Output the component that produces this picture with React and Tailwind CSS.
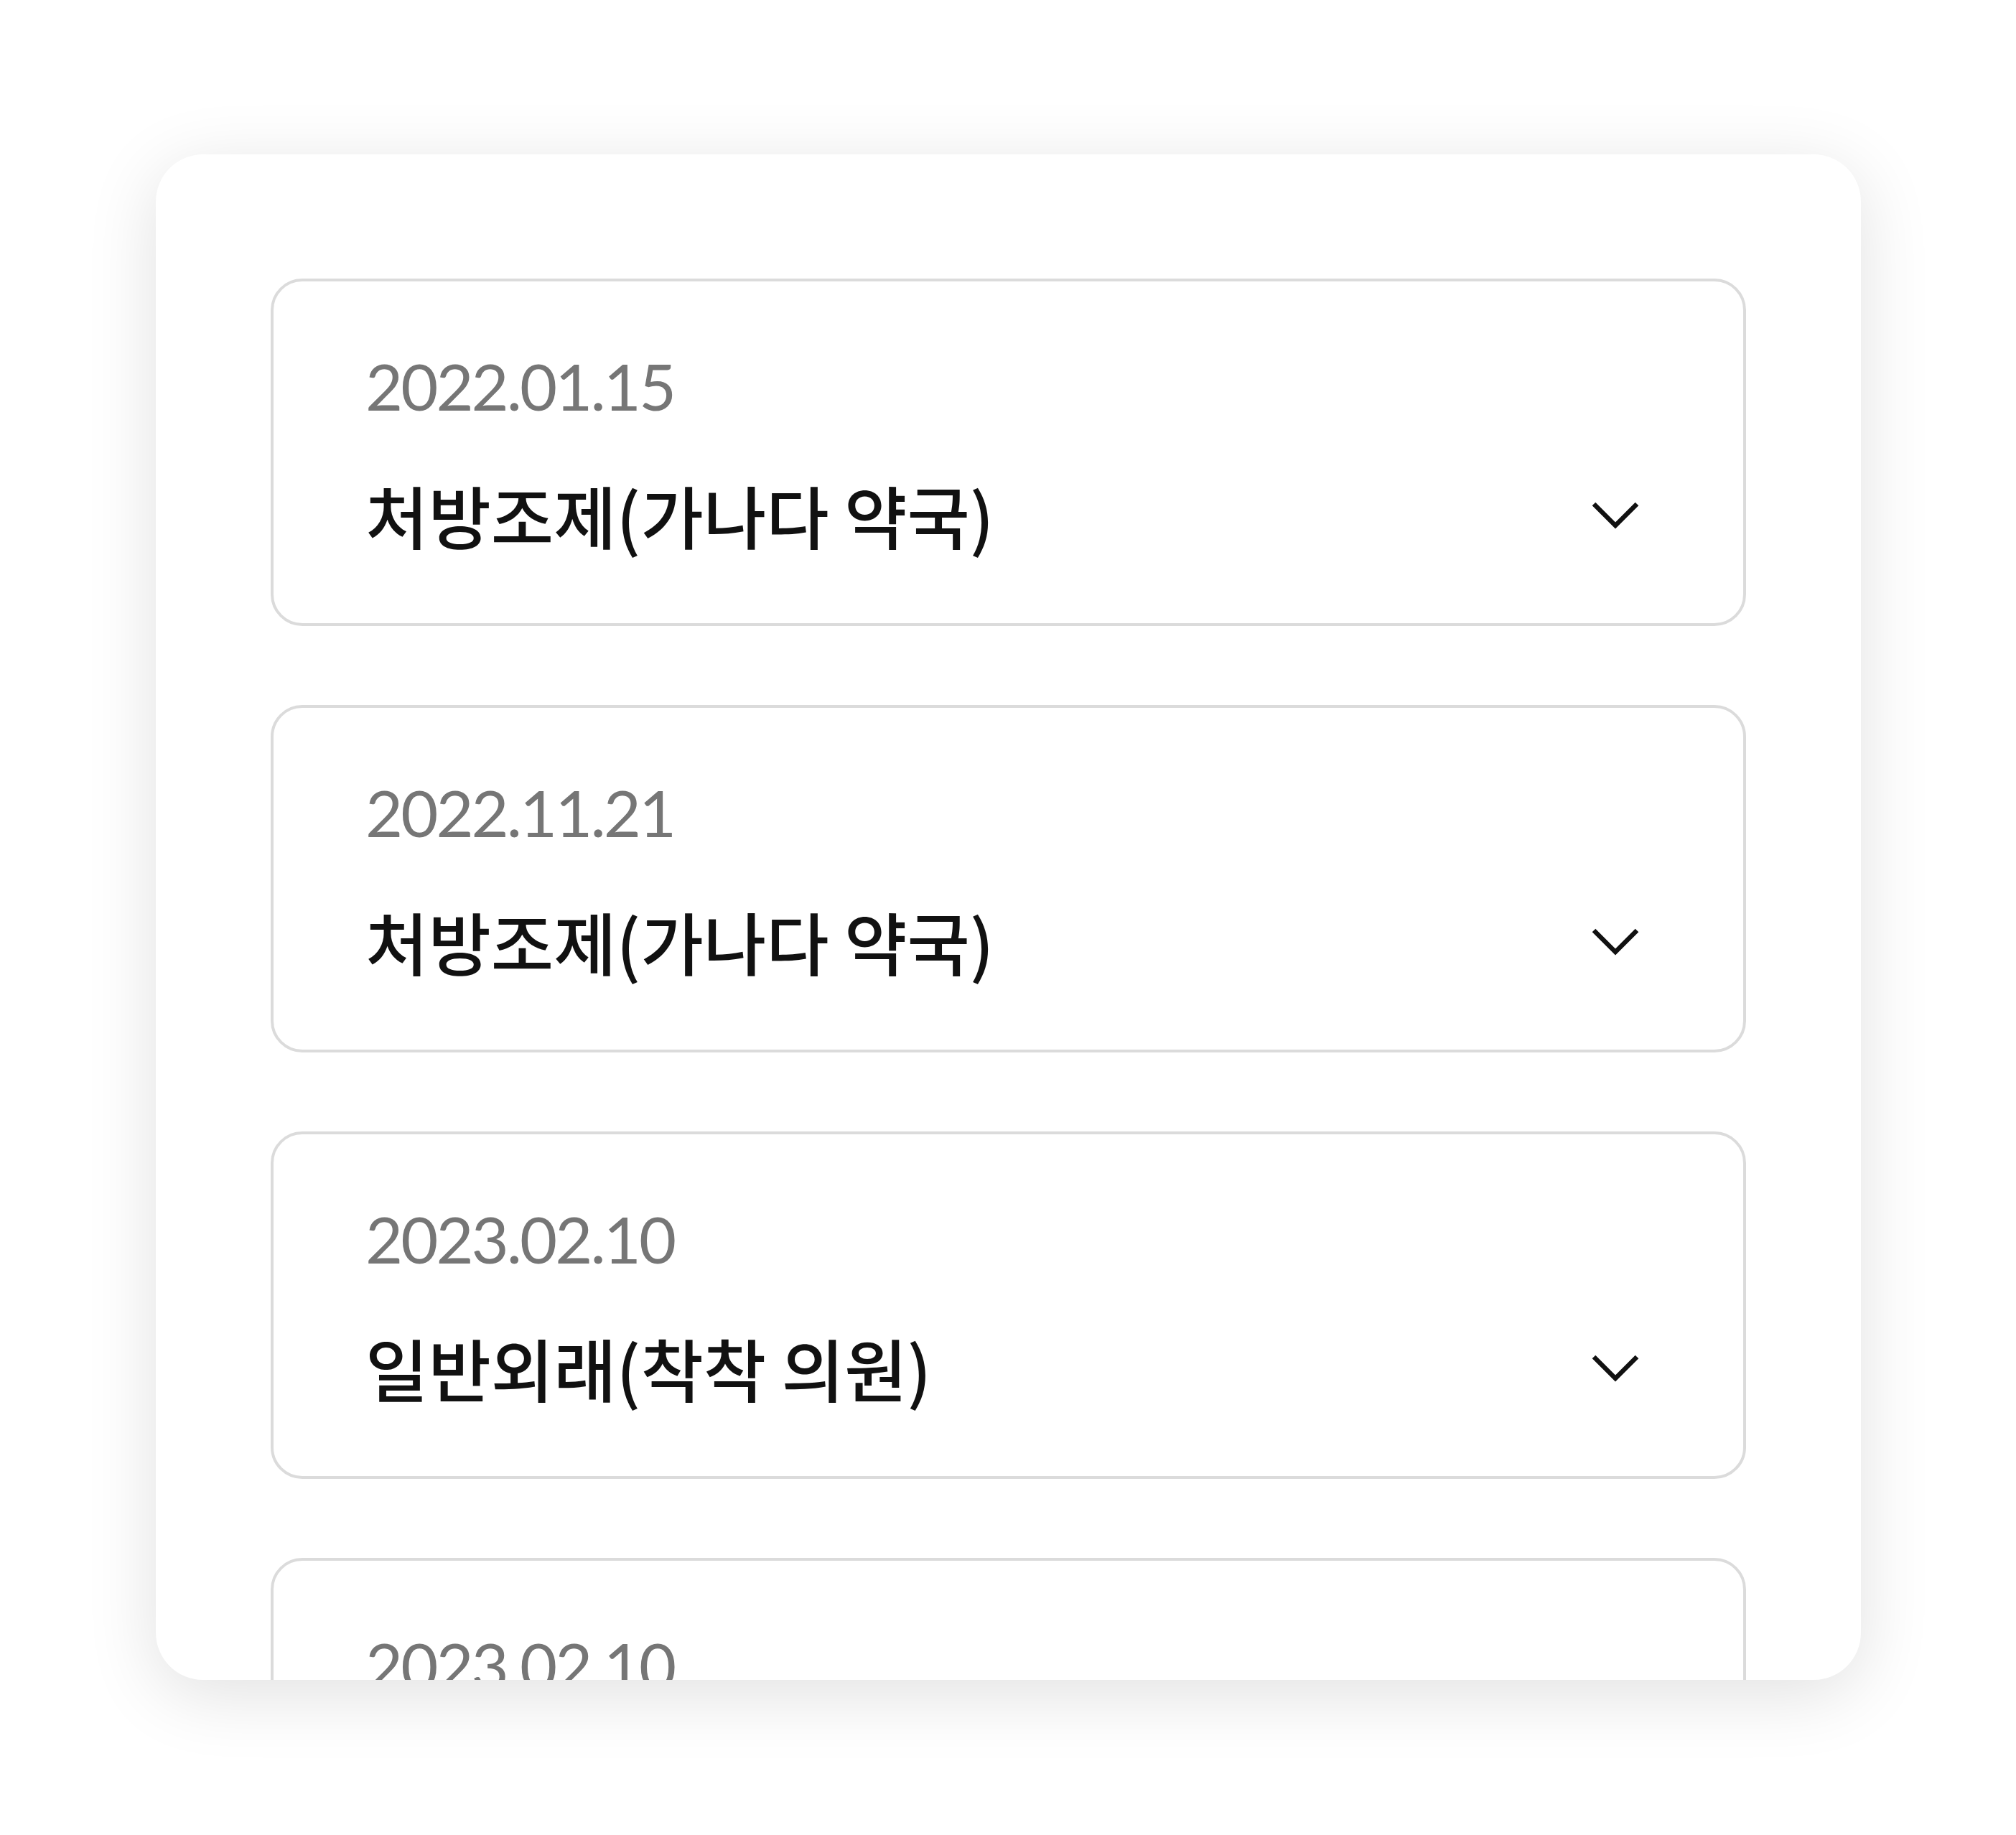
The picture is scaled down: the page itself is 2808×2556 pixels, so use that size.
import React from "react";

const records = [
  { date: "2022.01.15", title: "처방조제(가나다 약국)" },
  { date: "2022.11.21", title: "처방조제(가나다 약국)" },
  { date: "2023.02.10", title: "일반외래(착착 의원)" },
  { date: "2023.02.10", title: "일반외래(착착 의원)" },
];

const Chevron = () => (
  <svg width="68" height="40" viewBox="0 0 68 40" fill="none" className="shrink-0">
    <polyline points="4,5 34,35 64,5" stroke="#111111" strokeWidth="6.5" />
  </svg>
);

const RecordItem = ({ date, title }) => (
  <div className="shrink-0 h-[484px] rounded-[44px] border-4 border-[#dbdbdb] bg-white pt-[100px] pl-[128px] pr-[144px] flex flex-col">
    <p className="text-[90px] leading-[90px] tracking-[-3px] text-[#767676] font-['Lato',sans-serif]">
      {date}
    </p>
    <div className="mt-[89px] flex items-center justify-between">
      <p className="text-[95px] leading-[92px] tracking-normal font-medium text-[#111111] font-['Noto_Sans_CJK_KR',sans-serif]">
        {title}
      </p>
      <Chevron />
    </div>
  </div>
);

export default function App() {
  return (
    <div className="min-h-screen bg-white pl-[217px] pt-[215px]">
      <div className="w-[2375px] h-[2125px] rounded-[66px] overflow-hidden bg-white shadow-[0_20px_100px_rgba(0,0,0,0.12)] pt-[173px] px-[160px] flex flex-col gap-[110px]">
        {records.map((r, i) => (
          <RecordItem key={i} date={r.date} title={r.title} />
        ))}
      </div>
    </div>
  );
}
